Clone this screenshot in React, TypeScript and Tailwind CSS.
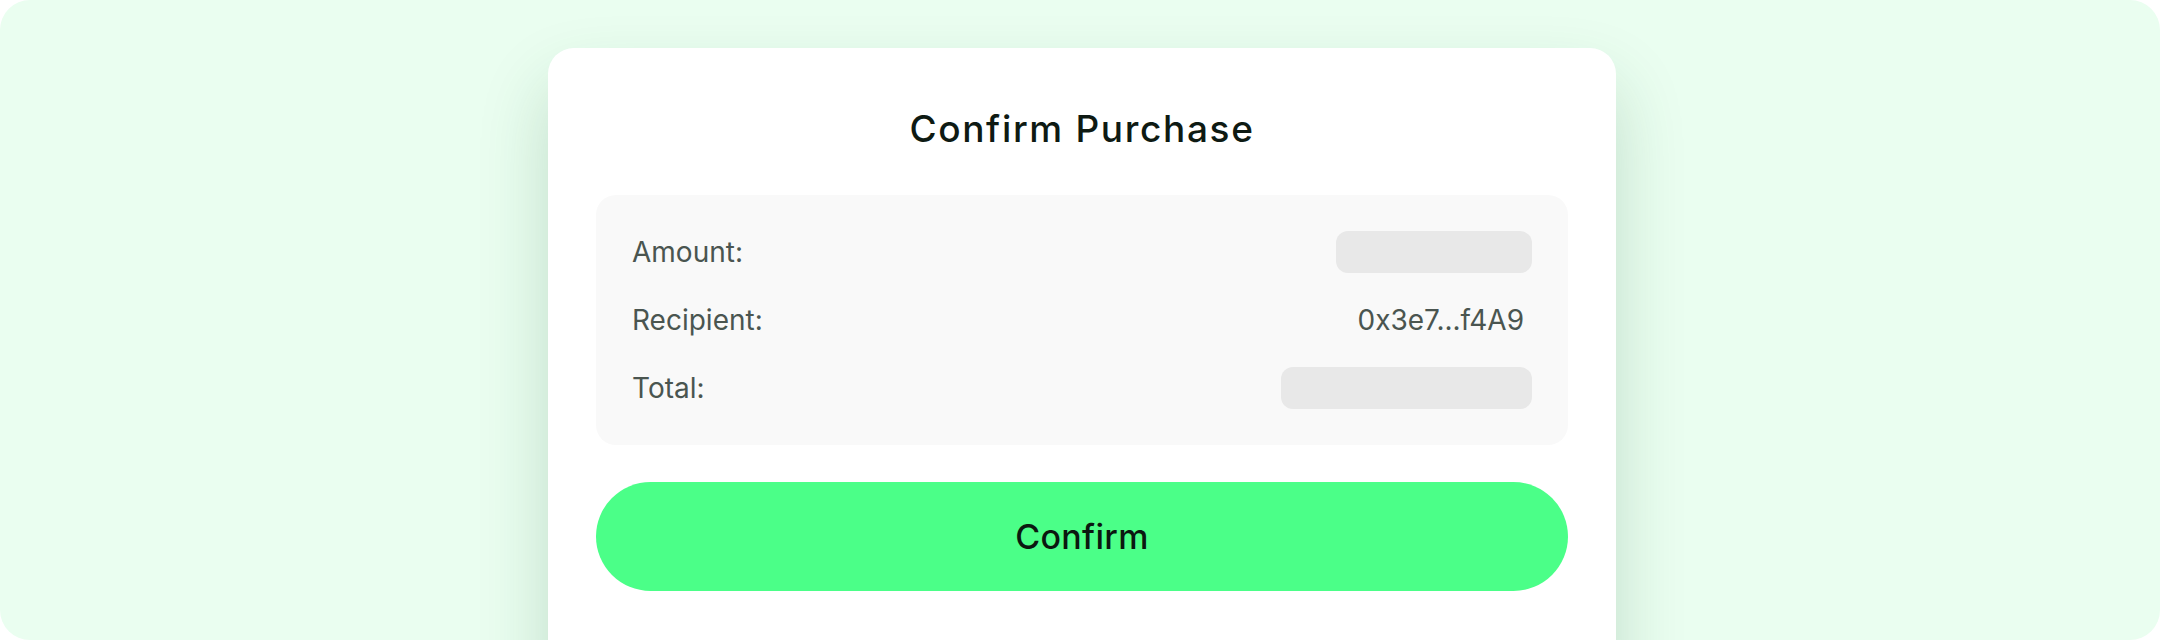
const rows = [
  { label: "Amount:", value: null, barWidth: "w-[196px]" },
  { label: "Recipient:", value: "0x3e7...f4A9", barWidth: "" },
  { label: "Total:", value: null, barWidth: "w-[251px]" },
];

const App = () => {
  return (
    <div className="h-[640px] w-full bg-white">
      <div className="flex h-full justify-center overflow-hidden rounded-[30px] bg-[#eafef0] pt-12 pl-1">
        <div className="h-[640px] w-[1068px] shrink-0 rounded-[26px] bg-white px-12 pt-[59px] shadow-[0_36px_70px_rgba(30,90,50,0.2)]">
          <h1 className="text-center font-['Inter',sans-serif] text-[37px] leading-[44px] font-medium tracking-[0.045em] text-[#0e1a13]">
            Confirm Purchase
          </h1>
          <div className="mt-11 flex flex-col gap-[26px] rounded-[20px] bg-[#f9f9f9] p-9">
            {rows.map((row) => (
              <div
                key={row.label}
                className="flex h-[42px] items-center justify-between font-['Inter',sans-serif] text-[28px] text-[#4a5550]"
              >
                <span>{row.label}</span>
                {row.value ? (
                  <span className="pr-2">{row.value}</span>
                ) : (
                  <div className={`h-[42px] rounded-xl bg-[#e8e8e8] ${row.barWidth}`} />
                )}
              </div>
            ))}
          </div>
          <button className="mt-[37px] flex h-[109px] w-full items-center justify-center rounded-full bg-[#4bff88] font-['Inter',sans-serif] text-[34px] font-medium tracking-[0.01em] text-[#0b1810]">
            Confirm
          </button>
        </div>
      </div>
    </div>
  );
};

export default App;
